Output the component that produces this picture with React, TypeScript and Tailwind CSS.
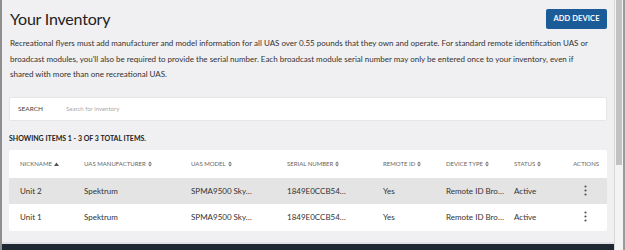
import * as React from "react";

const font = { fontFamily: "Lato, 'Liberation Sans', sans-serif" };

const rows = [
  { nick: "Unit 2", maker: "Spektrum", model: "SPMA9500 Sky…", serial: "1849E0CCB54…", rid: "Yes", type: "Remote ID Bro…", status: "Active" },
  { nick: "Unit 1", maker: "Spektrum", model: "SPMA9500 Sky…", serial: "1849E0CCB54…", rid: "Yes", type: "Remote ID Bro…", status: "Active" },
];

const cols = "grid grid-cols-[64px_107px_96px_96px_63px_68px_58px_1fr] items-center pl-[11px] pr-[8px]";

function SortIcon({ dir }: { dir?: "asc" }) {
  if (dir === "asc")
    return (
      <svg width="5" height="4" viewBox="0 0 5 4" className="ml-[2px] inline-block">
        <path d="M0 4 L2.5 0.5 L5 4 Z" fill="#555" />
      </svg>
    );
  return (
    <svg width="4" height="6" viewBox="0 0 4 6" className="ml-[2px] inline-block">
      <path d="M0 2.6 L2 0.4 L4 2.6 Z M0 3.4 L2 5.6 L4 3.4 Z" fill="#777" />
    </svg>
  );
}

function Kebab() {
  return (
    <svg width="3" height="11" viewBox="0 0 3 11">
      <circle cx="1.5" cy="1.5" r="1.1" fill="#555" />
      <circle cx="1.5" cy="5.5" r="1.1" fill="#555" />
      <circle cx="1.5" cy="9.5" r="1.1" fill="#555" />
    </svg>
  );
}

export default function App() {
  const headers: [string, "asc" | undefined][] = [
    ["NICKNAME", "asc"],
    ["UAS MANUFACTURER", undefined],
    ["UAS MODEL", undefined],
    ["SERIAL NUMBER", undefined],
    ["REMOTE ID", undefined],
    ["DEVICE TYPE", undefined],
    ["STATUS", undefined],
  ];

  return (
    <div className="flex h-[250px] w-[625px] overflow-hidden bg-[#f0eff1]" style={font}>
      <div className="w-[2px] bg-[#8e8e8e]" />
      <div className="flex flex-1 flex-col">
        <main className="flex-1 px-[7px] pt-[9px]">
          <div className="flex items-start justify-between">
            <h1 className="ml-[1px] mt-[-2px] text-[16px] leading-[24px] tracking-[-0.2px] text-[#222]">Your Inventory</h1>
            <button className="h-[20px] w-[61px] rounded-[2px] bg-[#1b5c98] text-[7.5px] font-bold tracking-[0.1px] text-white">
              ADD DEVICE
            </button>
          </div>
          <p className="ml-[1px] mt-[5px] text-[8px] leading-[15.5px] text-[#333]">
            Recreational flyers must add manufacturer and model information for all UAS over 0.55 pounds that they own and operate. For standard remote identification UAS or broadcast modules, you'll also be required to provide the serial number. Each broadcast module serial number may only be entered once to your inventory, even if
            <br />
            shared with more than one recreational UAS.
          </p>

          <div className="mt-[14px] flex h-[24px] items-center rounded-[2px] border border-[#e6e5e8] bg-white pl-[8px]">
            <span className="w-[48px] text-[6.5px] text-[#444]">SEARCH</span>
            <span className="text-[6px] text-[#aaa]">Search for inventory</span>
          </div>

          <div className="mt-[12px] text-[7px] font-bold leading-[10px] text-[#222]">
            SHOWING ITEMS 1 - 3 OF 3 TOTAL ITEMS.
          </div>

          <div className="mt-[7px] rounded-[2px] bg-white pb-[1px]">
            <div className={`${cols} h-[28px] text-[6px] text-[#666]`}>
              {headers.map(([h, d]) => (
                <span key={h} className="flex items-center whitespace-nowrap">
                  {h}
                  <SortIcon dir={d} />
                </span>
              ))}
              <span className="text-right">ACTIONS</span>
            </div>
            {rows.map((r, i) => (
              <div key={r.nick} className={`${cols} h-[26px] text-[8px] text-[#333] ${i === 0 ? "bg-[#e4e4e4]" : ""}`}>
                <span>{r.nick}</span>
                <span>{r.maker}</span>
                <span className="whitespace-nowrap">{r.model}</span>
                <span className="whitespace-nowrap">{r.serial}</span>
                <span>{r.rid}</span>
                <span className="whitespace-nowrap">{r.type}</span>
                <span>{r.status}</span>
                <span className="flex justify-end pr-[12px]">
                  <Kebab />
                </span>
              </div>
            ))}
          </div>
        </main>
        <div className="h-[2px] bg-[#e2e1e4]" />
        <div className="h-[6px] bg-[#1e2833]" />
      </div>
      <div className="flex w-[11px] border-l border-[#d8d8d8] bg-[#f3f3f3]">
        <div className="ml-[1px] mt-0 h-[165px] w-[6px] bg-[#c2c2c2]" />
        <div className="ml-auto w-[2px] bg-[#9a9a9a]" />
      </div>
    </div>
  );
}
